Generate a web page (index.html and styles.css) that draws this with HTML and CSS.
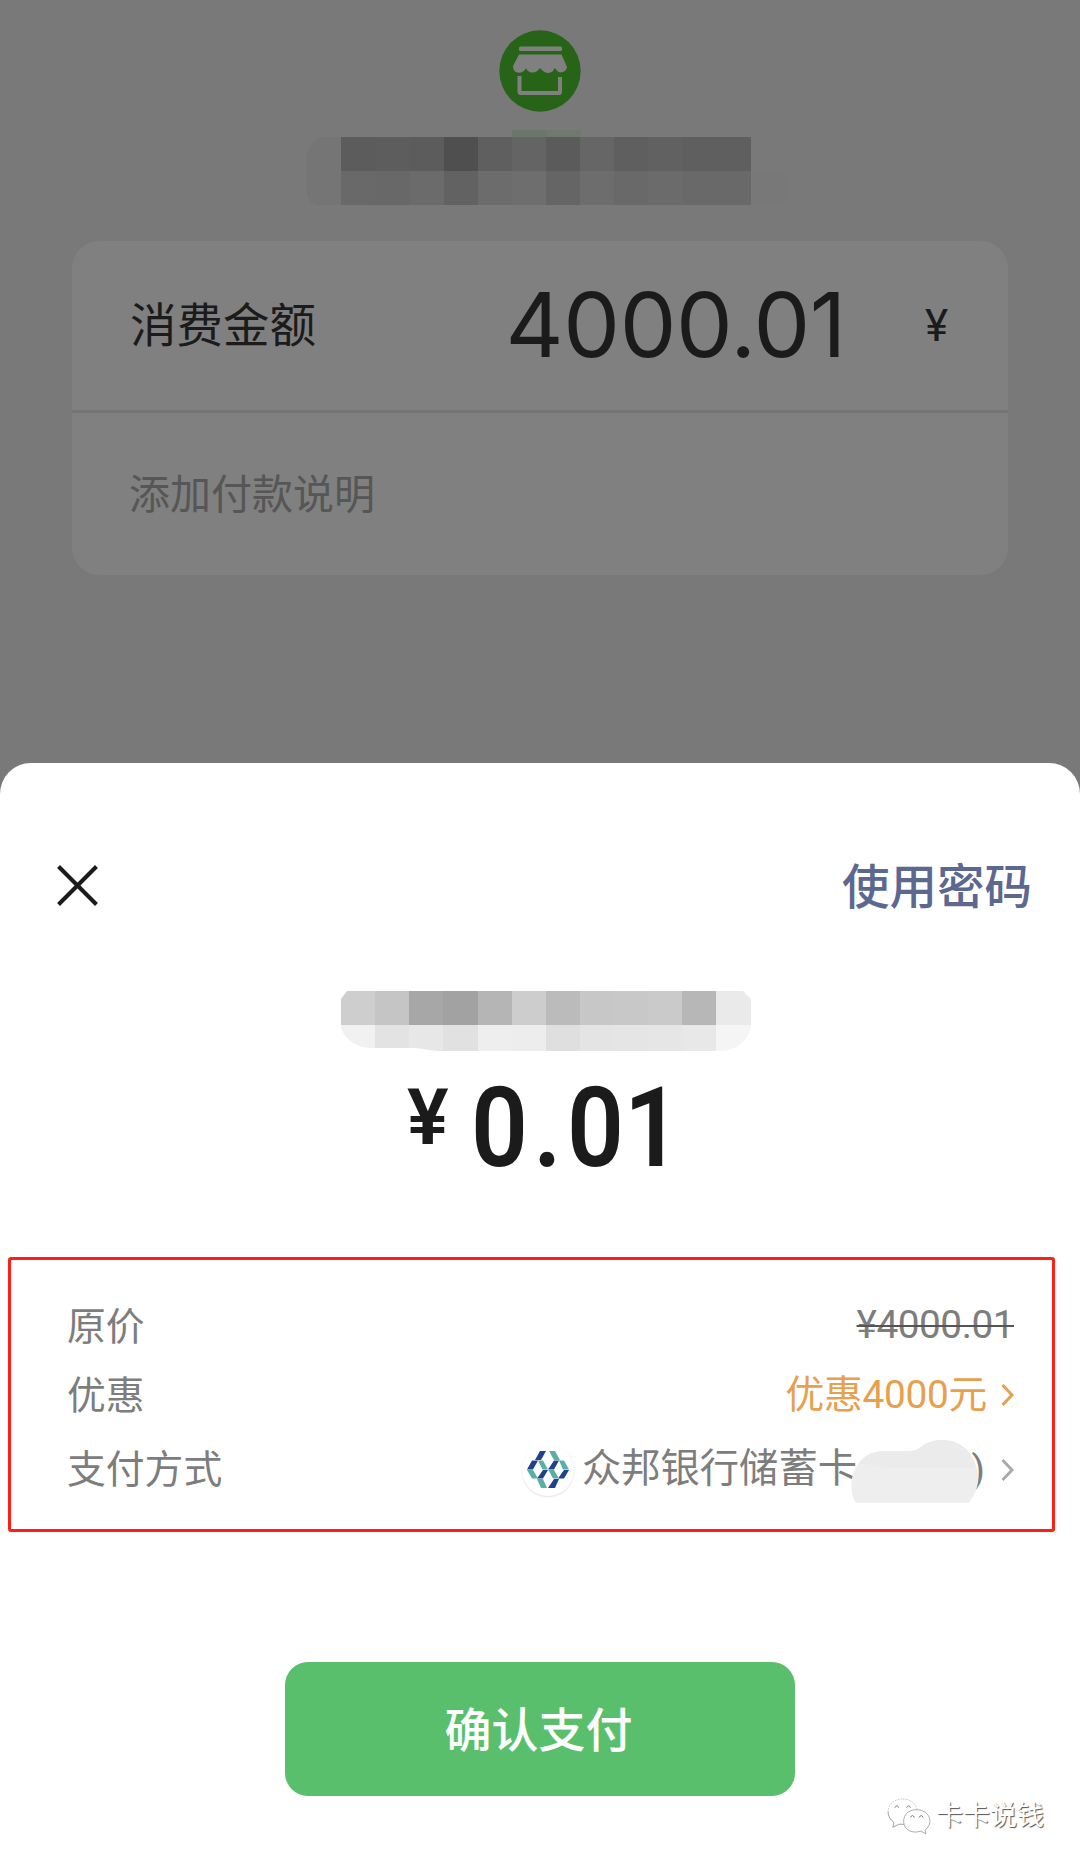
FILE: index.html
```
<!DOCTYPE html>
<html lang="zh-CN">
<head>
    <meta charset="UTF-8">
    <meta name="viewport" content="width=device-width, initial-scale=1.0">
    <title>确认支付</title>
    <link rel="stylesheet" href="styles.css">
</head>
<body>
    <div class="page">
        <div class="shop">
            <svg class="shop-icon" viewBox="0 0 82 82">
                <circle cx="41" cy="41" r="40.7" fill="#286418"/>
                <rect x="20" y="16.500" width="43" height="4.500" rx="1.500" fill="#808080"/>
                <path d="M20 24.500H62.500L68 37C67.500 41 63 43.500 59.500 42L55.500 38L54 41C50 44 46 43.500 42 39L41 38C37 43.500 32 44 28 40L27 38C25 43 19 44 15.500 41Q14 39 14 36Z" fill="#808080"/>
                <path d="M20.500 46V62Q20.500 63 22 63H60Q61 63 61 62V47" fill="none" stroke="#808080" stroke-width="4"/>
            </svg>
            <svg class="shop-name" viewBox="0 0 479 75" shape-rendering="crispEdges">
                <path d="M14 7H34V75H8Q0 71 0 62V24Q3 12 14 7Z" fill="#757575"/>
                <rect x="205" y="0" width="34" height="7" fill="#6b766a"/>
                <rect x="239" y="0" width="35" height="7" fill="#717870"/>
                <g id="shopCells"></g>
                <rect x="444" y="41" width="35" height="34" fill="#787878"/>
            </svg>
        </div>
        <div class="card">
            <div class="card-row amount-row">
                <span class="amount-label">消费金额</span>
                <span class="amount">4000.01</span>
                <span class="unit">¥</span>
            </div>
            <div class="card-row note-row">添加付款说明</div>
        </div>
    </div>

    <div class="sheet">
        <div class="sheet-head">
            <svg class="close" viewBox="0 0 40 40" stroke="#1b1b1b" stroke-width="4">
                <path d="M1.500 1.500L38.500 38.500M38.500 1.500L1.500 38.500"/>
            </svg>
            <span class="use-password">使用密码</span>
        </div>

        <svg class="payee" viewBox="0 0 410 60" shape-rendering="crispEdges">
            <clipPath id="payeeShape">
                <path d="M6 0H402L410 8V37C406 50 396 59 382 60H100C85 60 85 57 70 57H30C16 57 4 48 0 37V8Z"/>
            </clipPath>
            <g id="payeeCells" clip-path="url(#payeeShape)"></g>
        </svg>
        <div class="price"><span class="yen">¥</span><span class="price-num">0<span class="dot">.</span>01</span></div>

        <div class="details">
            <div class="row row-origin">
                <span>原价</span>
                <span class="origin-price">¥4000.01</span>
            </div>
            <div class="row row-discount">
                <span>优惠</span>
                <span class="value discount">优惠4000元
                    <svg class="arrow" viewBox="0 0 13 22"><path d="M1.500 1L11 11L1.500 21"/></svg>
                </span>
            </div>
            <div class="row row-method">
                <span>支付方式</span>
                <span class="value">
                    <span class="bank-logo">
                        <svg viewBox="0 0 42 37">
                            <g fill="#21418d">
                                <path d="M13 0H19L14 9H8Z"/>
                                <path d="M5 9.500H11L6 18.500H0Z"/>
                                <path d="M27 9.500H32L27 18.500H21Z"/>
                                <path d="M16 19H21L16 27.500H10Z"/>
                                <path d="M37 19H42L37 27.500H31Z"/>
                                <path d="M27 28H32L28 37H21Z"/>
                            </g>
                            <g fill="#58b0a3">
                                <path d="M22 0H28L33 9H27Z"/>
                                <path d="M11 9.500H16L21 18.500H15.500Z"/>
                                <path d="M32 9.500H37L42 18.500H36Z"/>
                                <path d="M0 19H6L11 27.500H5Z"/>
                                <path d="M21.500 19H27L32 27.500H26Z"/>
                                <path d="M10 28H16L20 37H14Z"/>
                            </g>
                        </svg>
                    </span>
                    <span class="bank-name">众邦银行储蓄卡</span>
                    <span class="card-no">(<svg class="card-mask" viewBox="0 0 128 63">
                        <path d="M5 63C-1 54-1 40 4 29C10 17 20 11 34 11H58C67 11 68 8 74 4C90-4 112 0 121 17C130 31 130 46 118 63Z" fill="#eee"/>
                        <path d="M8 23Q17 11 34 11H58C67 11 68 8 74 4C90-4 112 0 121 17L124 28H36Z" fill="#ebebeb"/>
                    </svg>)</span>
                    <svg class="arrow" viewBox="0 0 13 22"><path d="M1.500 1L11 11L1.500 21"/></svg>
                </span>
            </div>
        </div>

        <button class="confirm">确认支付</button>

        <div class="watermark">
            <svg viewBox="0 0 46 38" fill="#fff" stroke="#aaa" stroke-width="1">
                <path d="M16 1C7 1 1 7 1 14C1 19 3 22 7 25L6 30L12 27H18C26 27 31 21 31 14C31 7 25 1 16 1Z" stroke="#ccc" stroke-dasharray="2 1"/>
                <path d="M1 14C1 19 3 22 7 25L6 30L12 27H18" fill="none"/>
                <path d="M30 12C22 12 17 17 17 24C17 31 22 35 30 35L35 34L40 37L39 33C42 30 44 28 44 24C44 17 38 12 30 12Z"/>
                <path d="M8 10Q10 6 12 10M20 10Q22 6 24 10M24 20Q26 16 28 20M33 20Q35 16 37 20" stroke="#777"/>
            </svg>
            <span>卡卡说钱</span>
        </div>
    </div>

    <script>
        // Celdas del mosaico: cada fila tiene su lista de colores
        function drawCells(id, rows, x0) {
            let html = '';
            rows.forEach(row => {
                row.colors.forEach((color, i) => {
                    html += `<rect x="${x0 + i * 34.13}" y="${row.y}" width="34.5" height="${row.h}" fill="#${color}"/>`;
                });
            });
            document.getElementById(id).innerHTML = html;
        }

        drawCells('shopCells', [
            { y: 7, h: 34, colors: ['5c5c5c', '5d5d5d', '5c5c5c', '4f4f4f', '5f5f5f', '646464', '5b5b5b', '666666', '5f5f5f', '616161', '5f5f5f', '5f5f5f'] },
            { y: 41, h: 34, colors: ['696969', '686868', '6b6b6b', '626262', '6c6c6c', '6e6e6e', '656565', '6d6d6d', '696969', '6b6b6b', '696969', '696969'] }
        ], 34.3);

        drawCells('payeeCells', [
            { y: 0, h: 34, colors: ['cecece', 'c5c5c5', 'a7a7a7', 'a2a2a2', 'b5b5b5', 'cdcdcd', 'bbbbbb', 'c7c7c7', 'c8c8c8', 'cacaca', 'b7b7b7', 'eaeaea'] },
            { y: 34, h: 26, colors: ['f1f1f1', 'e3e3e3', 'e7e7e7', 'e1e1e1', 'eeeeee', 'ededed', 'dfdfdf', 'e4e4e4', 'e5e5e5', 'e6e6e6', 'e8e8e8', 'f5f5f5'] }
        ], 0);
    </script>
</body>
</html>
```
FILE: styles.css
```
* {
    box-sizing: border-box;
}
body {
    margin: 0;
    height: 1864px;
    background-color: #797979;
    font-family: Roboto, "Noto Sans CJK SC", sans-serif;
    overflow: hidden;
}
svg {
    display: block;
}

/* fondo */
.page {
    height: 763px;
    padding: 30px 72px 0;
}
.shop {
    display: flex;
    flex-direction: column;
    align-items: center;
}
.shop-icon {
    width: 82px;
    height: 82px;
}
.shop-name {
    width: 479px;
    height: 75px;
    margin-top: 18px;
    margin-left: 13px;
}
.card {
    height: 334px;
    margin-top: 36px;
    border-radius: 27px;
    background-color: #808080;
}
.card-row {
    display: flex;
    align-items: center;
    padding: 0 57px;
}
.amount-row {
    height: 172px;
    border-bottom: 3px solid #757575;
    color: #1b1b1b;
}
.amount-label {
    margin-left: 1px;
    font-size: 46.500px;
    line-height: 70px;
}
.amount {
    margin-left: auto;
    padding-bottom: 2px;
    font-family: Inter, sans-serif;
    font-size: 90px;
    font-weight: 400;
    letter-spacing: -0.4px;
    line-height: 100px;
}
.unit {
    width: 26px;
    margin-left: 79px;
    font-size: 44px;
}
.note-row {
    height: 156px;
    font-size: 41px;
    color: #565656;
}

/* panel de pago */
.sheet {
    display: flex;
    flex-direction: column;
    height: 1101px;
    border-radius: 31px 31px 0 0;
    background-color: #fff;
}
.sheet-head {
    display: flex;
    justify-content: space-between;
    align-items: center;
    height: 70px;
    margin-top: 87px;
    padding: 0 48px 0 57px;
}
.close {
    width: 41px;
    height: 41px;
}
.use-password {
    padding-bottom: 3px;
    font-size: 47.500px;
    font-weight: 500;
    color: #5c6890;
}
.payee {
    width: 410px;
    height: 60px;
    margin: 71px 0 0 341px;
}
.price {
    display: flex;
    align-items: flex-start;
    height: 120px;
    margin: 17px 0 0 407px;
    font-weight: 600;
    line-height: 120px;
    color: #1b1b1b;
}
.yen {
    width: 64px;
    font-size: 78px;
    line-height: 100px;
}
.price-num {
    font-size: 112px;
    transform: scaleX(0.89);
    transform-origin: left;
}
.dot {
    margin: 0 6px;
}
.details {
    width: 1047px;
    height: 275px;
    margin: 69px 0 0 8px;
    padding: 32px 38px 0 56px;
    border: 3px solid #ff2015;
    border-radius: 3px;
    font-size: 38.800px;
    line-height: 69px;
    color: #7d7d7d;
}
.row {
    display: flex;
    justify-content: space-between;
    height: 69px;
}
.row-method {
    margin-top: 5px;
}
.value {
    display: flex;
    align-items: center;
    height: 67px;
}
.row-method .value {
    height: 69px;
}
.origin-price {
    line-height: 66px;
    letter-spacing: -0.5px;
    text-decoration: line-through;
    text-decoration-color: #555;
    text-decoration-thickness: 2px;
}
.discount {
    letter-spacing: -0.3px;
    color: #e7a04d;
}
.arrow {
    width: 13px;
    height: 22px;
    margin-left: 14px;
    fill: none;
    stroke: currentColor;
    stroke-width: 3;
}
.row-method .arrow {
    margin-left: 16px;
    stroke: #aaa;
}
.bank-logo {
    display: flex;
    align-items: center;
    justify-content: center;
    width: 52px;
    height: 52px;
    margin-right: 8px;
    border-radius: 50%;
    box-shadow: 0 1px 2px rgba(0,0,0,0.12);
}
.bank-logo svg {
    width: 42px;
    height: 37px;
}
.bank-name {
    font-size: 39.300px;
}
.card-no {
    position: relative;
    display: flex;
    justify-content: space-between;
    width: 128px;
    padding-left: 14px;
}
.card-mask {
    position: absolute;
    left: -6px;
    top: 5px;
    width: 128px;
    height: 63px;
}
.confirm {
    width: 510px;
    height: 134px;
    margin: 130px 0 0 285px;
    padding: 0 3px 5px 0;
    border: none;
    border-radius: 23px;
    background-color: #5abf6c;
    font-family: inherit;
    font-size: 47px;
    font-weight: 500;
    color: #fff;
}
.watermark {
    display: flex;
    align-items: center;
    margin: 1px 36px 0 auto;
    font-size: 27px;
    line-height: 38px;
    color: #fff;
    text-shadow: 1px 1px 1px #555;
}
.watermark svg {
    width: 45px;
    height: 37px;
    margin-right: 4px;
}
```
